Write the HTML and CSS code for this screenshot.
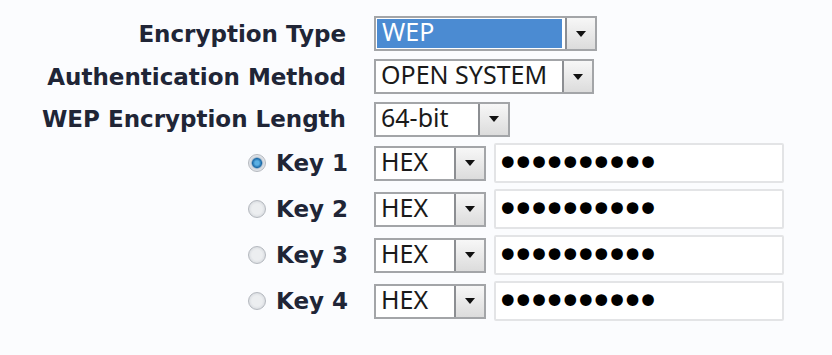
FILE: index.html
```html
<!DOCTYPE html>
<html lang="en">
<head>
  <meta charset="UTF-8">
  <title>Wireless Security</title>
  <link rel="stylesheet" href="styles.css">
</head>
<body>
  <form class="security">
    <label class="label" for="enc">Encryption Type</label>
    <div class="dropdown wide active">
      <select id="enc"><option>WEP</option><option>WPA</option></select>
      <span class="arrow"></span>
    </div>

    <label class="label" for="auth">Authentication Method</label>
    <div class="dropdown">
      <select id="auth"><option>OPEN SYSTEM</option><option>SHARED KEY</option></select>
      <span class="arrow"></span>
    </div>

    <label class="label" for="len">WEP Encryption Length</label>
    <div class="dropdown short">
      <select id="len"><option>64-bit</option><option>128-bit</option></select>
      <span class="arrow"></span>
    </div>

    <label class="label key"><input type="radio" name="key" checked> Key 1</label>
    <div class="keyrow">
      <div class="dropdown hex"><select><option>HEX</option><option>ASCII</option></select><span class="arrow"></span></div>
      <input class="keyval" type="password" value="1234567890">
    </div>

    <label class="label key"><input type="radio" name="key"> Key 2</label>
    <div class="keyrow">
      <div class="dropdown hex"><select><option>HEX</option><option>ASCII</option></select><span class="arrow"></span></div>
      <input class="keyval" type="password" value="1234567890">
    </div>

    <label class="label key"><input type="radio" name="key"> Key 3</label>
    <div class="keyrow">
      <div class="dropdown hex"><select><option>HEX</option><option>ASCII</option></select><span class="arrow"></span></div>
      <input class="keyval" type="password" value="1234567890">
    </div>

    <label class="label key"><input type="radio" name="key"> Key 4</label>
    <div class="keyrow">
      <div class="dropdown hex"><select><option>HEX</option><option>ASCII</option></select><span class="arrow"></span></div>
      <input class="keyval" type="password" value="1234567890">
    </div>
  </form>
</body>
</html>
```

FILE: styles.css
```css
* { box-sizing: border-box; margin:0; padding:0; }
body {
  background: #fbfcfe;
  font-family: 'DejaVu Sans', sans-serif;
  color: #202536;
}
.security {
  display: grid;
  grid-template-columns: 346px 1fr;
  grid-template-rows: 43px 43px 42px 46px 46px 46px 46px;
  column-gap: 28px;
  padding-top: 12px;
  align-items: center;
}
.label {
  text-align: right;
  font-weight: bold;
  font-size: 23px;
  display: flex; justify-content: flex-end; align-items: center;
}
.label.key { margin-right: -2px; }
.label input[type=radio] {
  appearance: none;
  width: 18px; height: 18px;
  border-radius: 50%;
  border: 1px solid #b4b8be;
  background: radial-gradient(circle, #eceef0 0 45%, #dcdfe3 70%, #f4f5f6 100%);
  margin-right: 10px;
}
.label input[type=radio]:checked {
  background: radial-gradient(circle, #5ab0e4 0 18%, #1d6ba8 40%, #cfd5dc 52%, #eef0f3 80%);
}
.dropdown {
  display: flex;
  height: 35px;
  width: 220px;
  border: 2px solid #a3a5a8;
  background: #fff;
}
.dropdown.wide { width: 223px; }
.dropdown.short { width: 136px; }
.dropdown.hex { width: 112px; }
.dropdown select {
  appearance: none;
  flex: 1; min-width: 0;
  border: none; outline: none;
  background: #fff;
  font-family: 'Noto Sans', sans-serif;
  font-size: 25px;
  line-height: 1;
  color: #1a1a1a;
  padding: 0 0 4px 5px;
}
.dropdown.active select {
  background: #4b8bd2;
  color: #fff;
  margin: 1px 3px 1px 1px;
}
.arrow {
  width: 30px;
  border-left: 2px solid #8c8e92;
  background: linear-gradient(#f7f7f7, #dcdcdc);
  display: flex; align-items: center; justify-content: center;
}
.arrow::after {
  content: "";
  border-left: 5px solid transparent;
  border-right: 5px solid transparent;
  border-top: 6px solid #111;
}
.keyrow {
  display: flex; align-items: center;
  gap: 8px;
}
.keyval {
  width: 290px; height: 40px;
  border: 2px solid #e3e4e6;
  border-radius: 2px;
  background: #fff;
  padding-left: 0;
  font-family: 'DejaVu Sans', sans-serif;
  font-size: 40px;
  letter-spacing: -8px;
  color: #000;
}
```
